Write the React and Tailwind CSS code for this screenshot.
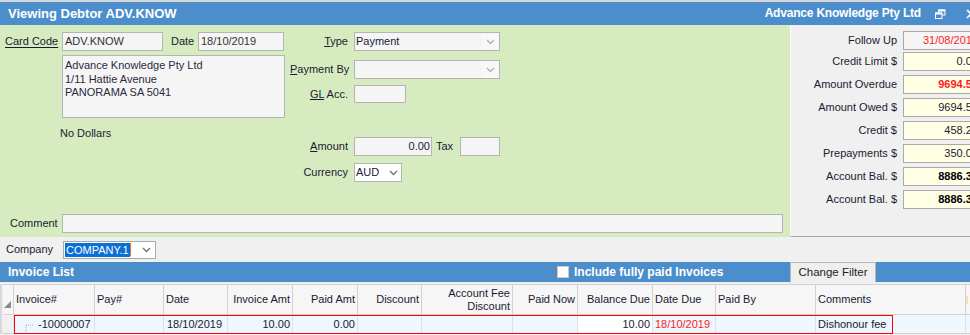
import React from "react";

const Chevron = ({ className = "" }) => (
  <svg width="9" height="6" viewBox="0 0 9 6" className={className}>
    <path d="M1 1 L4.5 4.5 L8 1" fill="none" stroke="currentColor" strokeWidth="1.3" />
  </svg>
);

const Box = ({ className = "", children }) => (
  <div className={"flex items-center border border-[#b4b4b4] px-[2px] overflow-hidden whitespace-nowrap " + className}>
    {children}
  </div>
);

const RightRow = ({ label, value, className = "", valueClass = "", bg = "bg-[#ffffe6]" }) => (
  <div className={"flex items-center h-[19px] w-[200px] " + className}>
    <span className="w-[106px] shrink-0 text-right text-[#1a1a32] whitespace-nowrap">{label}</span>
    <div className={"ml-[6px] w-[80px] h-[19px] shrink-0 flex items-center justify-end pr-[4px] border border-[#a9a9a9] " + bg}>
      <span className={valueClass}>{value}</span>
    </div>
  </div>
);

const cols = [
  { w: "w-[11px]", label: "", align: "left" },
  { w: "w-[81px]", label: "Invoice#", align: "left" },
  { w: "w-[69px]", label: "Pay#", align: "left" },
  { w: "w-[64px]", label: "Date", align: "left" },
  { w: "w-[65px]", label: "Invoice Amt", align: "right" },
  { w: "w-[65px]", label: "Paid Amt", align: "right" },
  { w: "w-[64px]", label: "Discount", align: "right" },
  { w: "w-[91px]", label: "Account Fee\nDiscount", align: "right" },
  { w: "w-[65px]", label: "Paid Now", align: "right" },
  { w: "w-[75px]", label: "Balance Due", align: "right" },
  { w: "w-[63px]", label: "Date Due", align: "left" },
  { w: "w-[100px]", label: "Paid By", align: "left" },
  { w: "w-[150px]", label: "Comments", align: "left" },
];

export default function App() {
  return (
    <div className="w-[970px] h-[335px] overflow-hidden bg-[#f0f0f0] font-['Liberation_Sans',Arial,sans-serif] text-[11px] leading-[13px] text-[#1a1a32]">
      <div className="h-[2px] bg-[#d6d6d6]" />
      {/* Title bar */}
      <div className="h-[23px] bg-[#4b8ecb] flex items-center text-white font-bold overflow-hidden">
        <span className="pl-[8px] text-[13px]">Viewing Debtor ADV.KNOW</span>
        <div className="ml-auto mr-[-6px] flex items-center shrink-0">
          <span className="text-[12px] tracking-[-0.2px]">Advance Knowledge Pty Ltd</span>
          <svg width="11" height="10" viewBox="0 0 11 10" className="ml-[14px]">
            <rect x="3.5" y="1" width="6.5" height="5" fill="none" stroke="white" strokeWidth="1" />
            <line x1="3.5" y1="1.5" x2="10" y2="1.5" stroke="white" strokeWidth="2" />
            <rect x="0.5" y="4" width="6.5" height="5.5" fill="#4b8ecb" stroke="white" strokeWidth="1" />
            <line x1="0.5" y1="4.5" x2="7" y2="4.5" stroke="white" strokeWidth="2" />
          </svg>
          <svg width="10" height="10" viewBox="0 0 10 10" className="ml-[20px] shrink-0">
            <path d="M1 1 L9 9 M9 1 L1 9" stroke="white" strokeWidth="1.6" />
          </svg>
        </div>
      </div>

      {/* Main */}
      <div className="flex h-[212px]">
        <div className="w-[790px] shrink-0 bg-[#d6ecc0] flex flex-col">
          <div className="flex pt-[7px]">
            <div className="w-[290px] pl-[5px]">
              <div className="flex items-center h-[19px]">
                <span className="w-[57px] underline underline-offset-[2px]">Card Code</span>
                <Box className="w-[101px] h-[19px] bg-[#f5f5f5] text-[#333]">ADV.KNOW</Box>
                <span className="ml-[8px] w-[27px]">Date</span>
                <Box className="w-[86px] h-[19px] bg-[#f5f5f5] text-[#333]">18/10/2019</Box>
              </div>
              <div className="ml-[57px] mt-[4px] w-[223px] h-[63px] border border-[#b4b4b4] bg-[#f5f5f5] px-[2px] pt-[3px] leading-[13.5px] text-[#2a2a40]">
                <div>Advance Knowledge Pty Ltd</div>
                <div>1/11 Hattie Avenue</div>
                <div>PANORAMA SA 5041</div>
              </div>
              <div className="ml-[55px] mt-[9px]">No Dollars</div>
            </div>
            <div className="flex flex-col">
              <div className="flex items-center h-[19px]">
                <span className="w-[58px] text-right"><span className="underline">T</span>ype</span>
                <div className="ml-[6px] w-[146px] h-[19px] flex border border-[#b4b4b4] bg-[#f5f5f5]">
                  <span className="flex-1 pl-[1px] flex items-center">Payment</span>
                  <span className="w-[17px] flex items-center justify-center bg-[#f8f8f8] text-[#b0b0b0]"><Chevron /></span>
                </div>
              </div>
              <div className="flex items-center h-[19px] mt-[9px]">
                <span className="w-[58px] text-right whitespace-nowrap"><span className="underline">P</span>ayment By</span>
                <div className="ml-[6px] w-[146px] h-[19px] flex border border-[#b4b4b4] bg-[#f5f5f5]">
                  <span className="flex-1" />
                  <span className="w-[17px] flex items-center justify-center bg-[#f8f8f8] text-[#b0b0b0]"><Chevron /></span>
                </div>
              </div>
              <div className="flex items-center h-[18px] mt-[6px]">
                <span className="w-[58px] text-right"><span className="underline">GL</span> Acc.</span>
                <Box className="ml-[6px] w-[52px] h-[18px] bg-[#f5f5f5]" />
              </div>
              <div className="flex items-center h-[19px] mt-[34px]">
                <span className="w-[58px] text-right"><span className="underline">A</span>mount</span>
                <Box className="ml-[6px] w-[78px] h-[19px] bg-[#f5f5f5] justify-end pr-[1px] text-[#202040]">0.00</Box>
                <span className="ml-[4px] w-[24px]">Tax</span>
                <Box className="w-[40px] h-[19px] bg-[#f5f5f5]" />
              </div>
              <div className="flex items-center h-[19px] mt-[7px]">
                <span className="w-[58px] text-right">Currency</span>
                <div className="ml-[6px] w-[48px] h-[19px] flex items-center border border-[#b4b4b4] bg-white">
                  <span className="flex-1 pl-[1px] text-[#202040]">AUD</span>
                  <Chevron className="mr-[3px] text-[#707070]" />
                </div>
              </div>
            </div>
          </div>
          <div className="mt-auto mb-[4px] flex items-center h-[19px] pl-[10px]">
            <span className="w-[52px]">Comment</span>
            <Box className="w-[721px] h-[19px] bg-[#f5f5f5]" />
          </div>
        </div>
        <div className="flex-1 min-w-0 border-l border-[#fafafa] border-b border-b-[#a8a8a8] bg-[#f0f0f0] pt-[6px] overflow-hidden">
          <RightRow label="Follow Up" value="31/08/2019" bg="bg-[#f5f5f5]" valueClass="text-[#ff1a1a]" />
          <RightRow label="Credit Limit $" value="0.00" className="mt-[2px]" />
          <RightRow label="Amount Overdue" value="9694.54" className="mt-[4px]" valueClass="text-[#ff1a1a] font-bold" />
          <RightRow label="Amount Owed $" value="9694.54" className="mt-[4px]" />
          <RightRow label="Credit $" value="458.20" className="mt-[4px]" />
          <RightRow label="Prepayments $" value="350.00" className="mt-[4px]" />
          <RightRow label="Account Bal. $" value="8886.34" className="mt-[4px]" valueClass="font-bold text-black" />
          <RightRow label="Account Bal. $" value="8886.34" className="mt-[4px]" valueClass="font-bold text-black" />
        </div>
      </div>

      {/* Company row */}
      <div className="h-[25px] flex items-center pl-[6px]">
        <span className="w-[57px]">Company</span>
        <div className="w-[93px] h-[18px] flex items-center border border-[#a9a9a9] bg-white">
          <span className="ml-[1px] bg-[#0a6fd6] text-white px-[1px] leading-[14px]">COMPANY.1</span>
          <span className="w-[1px] h-[13px] bg-[#e07a20]" />
          <span className="flex-1" />
          <Chevron className="mr-[4px] text-[#707070]" />
        </div>
      </div>

      {/* Invoice list bar */}
      <div className="h-[20px] bg-[#4b8ecb] flex items-stretch text-white font-bold text-[12px]">
        <div className="w-[557px] pl-[8px] flex items-center">Invoice List</div>
        <div className="w-[233px] flex items-center">
          <span className="w-[12px] h-[12px] bg-white border border-[#c8c8c8]" />
          <span className="ml-[5px]">Include fully paid Invoices</span>
        </div>
        <div className="w-[86px] flex items-center justify-center bg-[#efefef] border-x border-t border-[#b9b9b9] text-[#222] font-normal text-[11.5px]">
          Change Filter
        </div>
      </div>

      {/* Grid */}
      <div className="mt-[2px] pl-[1px] border-l-[2px] border-l-[#d8d8d8]">
        <div className="flex h-[31px] border-y border-[#d2d2d2] bg-[#f6f6f6]">
          {cols.map((c, i) => (
            <div
              key={i}
              className={
                c.w +
                " shrink-0 border-r border-[#d2d2d2] flex items-center px-[2px] whitespace-pre-line leading-[13px] " +
                (c.align === "right" ? "justify-end text-right" : "justify-start")
              }
            >
              {i === 0 ? (
                <svg width="7" height="7" viewBox="0 0 7 7" className="self-end mb-[6px] -ml-[1px]">
                  <path d="M7 0 L7 7 L0 7 Z" fill="#8a8a8a" />
                </svg>
              ) : (
                c.label
              )}
            </div>
          ))}
          <div className="w-[4px] shrink-0 flex items-center">
            <span className="w-[2px] h-[8px] bg-[#fbe0b0]" />
          </div>
        </div>
        <div className="relative flex h-[19px] border-b border-[#d2d2d2]">
          {cols.map((c, i) => {
            let content = null;
            let bg = "bg-[#eef7fd]";
            let extra = "";
            if (i === 0) bg = "bg-[#f0f0f0]";
            if (i === 1)
              content = (
                <>
                  <svg width="10" height="12" viewBox="0 0 10 12" className="ml-[9px] self-end">
                    <path d="M1 4 L9 4 M1 4 L1 12" stroke="#b0b0b0" strokeWidth="1" strokeDasharray="1 1" fill="none" />
                  </svg>
                  <span className="ml-[3px]">-10000007</span>
                </>
              );
            if (i === 3) content = <span className="pl-[1px]">18/10/2019</span>;
            if (i === 4) content = "10.00";
            if (i === 5) content = "0.00";
            if (i === 9) {
              content = "10.00";
              bg = "bg-white";
            }
            if (i === 10) content = <span className="text-[#ff1a1a]">18/10/2019</span>;
            if (i === 12) content = "Dishonour fee";
            if (i === 1) extra = " px-0";
            return (
              <div
                key={i}
                className={
                  c.w +
                  " shrink-0 border-r border-[#dde3e8] flex items-center px-[2px] whitespace-nowrap " +
                  bg +
                  " " +
                  (c.align === "right" ? "justify-end" : "justify-start") +
                  extra
                }
              >
                {content}
              </div>
            );
          })}
          <div className="flex-1 bg-[#eef7fd]" />
          <div className="absolute left-[11px] top-0 w-[879px] h-[19px] border border-[#ff0000] pointer-events-none" />
        </div>
      </div>
    </div>
  );
}
